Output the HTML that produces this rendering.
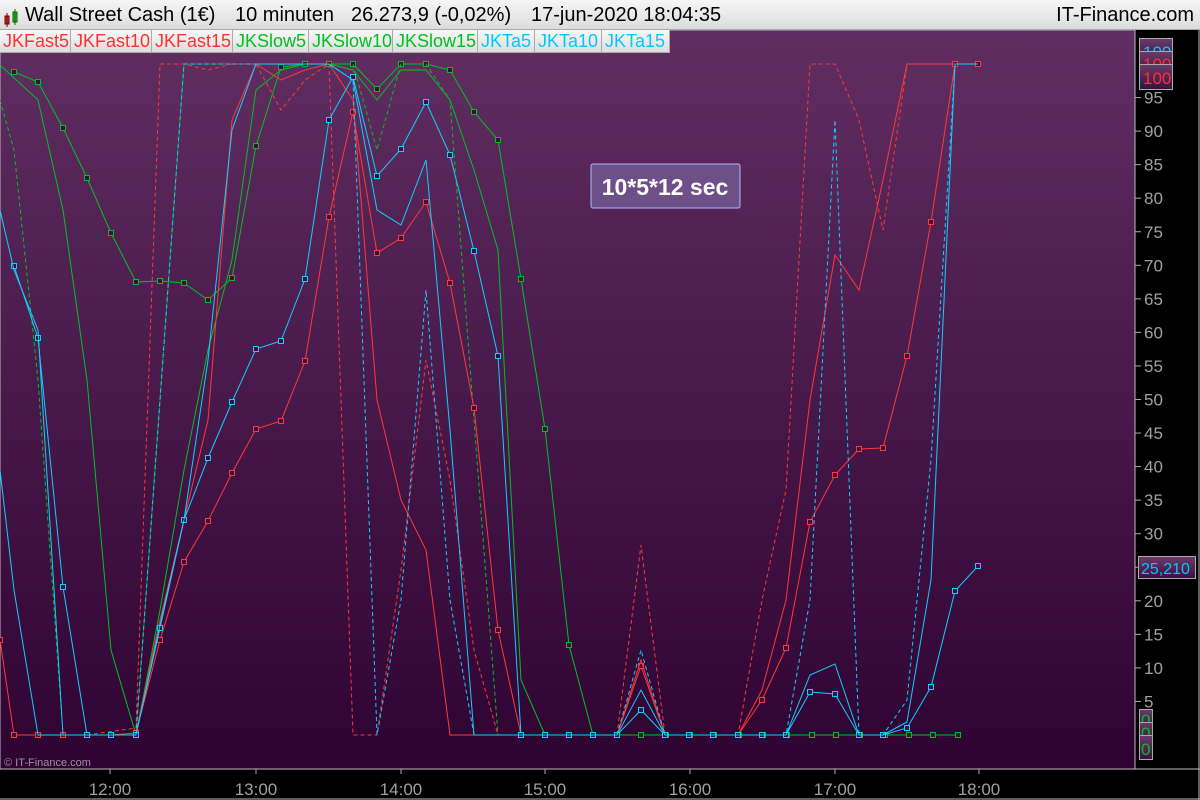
<!DOCTYPE html>
<html><head><meta charset="utf-8"><style>
body{margin:0;width:1200px;height:800px;background:#000;overflow:hidden;font-family:"Liberation Sans",sans-serif;position:relative}
#hdr{position:absolute;left:0;top:0;width:1200px;height:29px;background:linear-gradient(#f6f6f6,#dcdcdc);border-bottom:1px solid #aaa;font-size:20px;line-height:31px;color:#000}
#hdr .t{position:absolute;top:0;white-space:pre}
#leg{position:absolute;left:0;top:30px;height:22px;display:flex}
#leg div{box-sizing:border-box;font-size:18px;line-height:23px;padding-left:3px;background:linear-gradient(#f8f8f8,#dedede);border-right:1px solid #aaa;border-bottom:1px solid #aaa;height:23px;white-space:nowrap;overflow:hidden}
.r{color:#ff3030}.g{color:#00c020}.c{color:#00c8ff}
</style></head><body>
<svg width="1200" height="800" style="position:absolute;left:0;top:0">
<defs><linearGradient id="bg" x1="0" y1="0" x2="0" y2="1"><stop offset="0" stop-color="#612e62"/><stop offset="1" stop-color="#2e0332"/></linearGradient>
<linearGradient id="bx" x1="0" y1="0" x2="0" y2="1"><stop offset="0" stop-color="#6a3a6a"/><stop offset="1" stop-color="#3a1040"/></linearGradient></defs>
<rect x="0" y="30" width="1135" height="739" fill="url(#bg)" stroke="#bbb"/>
<line x1="0" y1="769" x2="1200" y2="769" stroke="#bbb"/>
<line x1="0" y1="799" x2="1200" y2="799" stroke="#bbb"/>
<line x1="1199" y1="30" x2="1199" y2="800" stroke="#bbb"/>
<g id="ax" fill="#a0a0a0" font-size="17" font-family="Liberation Sans"></g>
<g id="lines" fill="none" stroke-width="1"></g>
<text x="4" y="766" fill="#a090a0" font-size="11">© IT-Finance.com</text>
<rect x="591" y="164" width="149" height="44" rx="2" fill="#6e5088" stroke="#b0b8ff"/>
<text x="665" y="195" fill="#fff" font-size="23" font-weight="bold" text-anchor="middle">10*5*12 sec</text>
<g font-size="17">
<rect x="1139.5" y="38.5" width="33" height="25" fill="url(#bx)" stroke="#aaa"/><text x="1143" y="58" fill="#00c8ff">100</text>
<rect x="1139.5" y="51.5" width="33" height="25" fill="url(#bx)" stroke="#aaa"/><text x="1143" y="70" fill="#ff3030">100</text>
<rect x="1139.5" y="64.5" width="33" height="25" fill="url(#bx)" stroke="#aaa"/><text x="1143" y="84" fill="#ff3030">100</text>
<rect x="1138.5" y="556.5" width="57" height="22" fill="url(#bx)" stroke="#aaa"/><text x="1141" y="574" fill="#00c8ff" font-size="16">25,210</text>
<rect x="1139.5" y="709.5" width="13" height="20" fill="url(#bx)" stroke="#aaa"/><text x="1141" y="726" fill="#00c020">0</text>
<rect x="1139.5" y="722.5" width="13" height="20" fill="url(#bx)" stroke="#aaa"/><text x="1141" y="739" fill="#00c020">0</text>
<rect x="1139.5" y="735.5" width="13" height="24" fill="url(#bx)" stroke="#aaa"/><text x="1141" y="755" fill="#00c020">0</text>
</g>
</svg>
<div id="hdr"><span class="t" style="left:3px;top:6px"><svg width="20" height="18"><rect x="2" y="7" width="4" height="8" fill="#e03030" stroke="#600"/><line x1="4" y1="4" x2="4" y2="18" stroke="#600"/><rect x="10" y="3" width="4" height="10" fill="#30c030" stroke="#060"/><line x1="12" y1="0" x2="12" y2="16" stroke="#060"/></svg></span>
<span class="t" style="left:25px">Wall Street Cash (1€)</span>
<span class="t" style="left:235px">10 minuten</span>
<span class="t" style="left:351px">26.273,9 (-0,02%)</span>
<span class="t" style="left:531px">17-jun-2020 18:04:35</span>
<span class="t" style="right:6px">IT-Finance.com</span></div>
<div id="leg"><div class="r" style="width:71px">JKFast5</div><div class="r" style="width:81px">JKFast10</div><div class="r" style="width:81px">JKFast15</div><div class="g" style="width:76px">JKSlow5</div><div class="g" style="width:84px">JKSlow10</div><div class="g" style="width:85px">JKSlow15</div><div class="c" style="width:57px">JKTa5</div><div class="c" style="width:67px">JKTa10</div><div class="c" style="width:68px">JKTa15</div></div>
<script>
var NS="http://www.w3.org/2000/svg";
function el(t,a,p){var e=document.createElementNS(NS,t);for(var k in a)e.setAttribute(k,a[k]);(p||document.getElementById('lines')).appendChild(e);return e;}
var ax=document.getElementById('ax');
for(var v=5;v<=95;v+=5){var y=735-6.71*v;el('line',{x1:1135,y1:y,x2:1141,y2:y,stroke:'#aaa'},ax);var t=el('text',{x:1144,y:y+6},ax);t.textContent=v;}
var hrs=[[110,'12:00'],[256,'13:00'],[401,'14:00'],[545,'15:00'],[690,'16:00'],[835,'17:00'],[979,'18:00']];
hrs.forEach(function(h){el('line',{x1:h[0],y1:769,x2:h[0],y2:774,stroke:'#aaa'},ax);var t=el('text',{x:h[0],y:795,'text-anchor':'middle'},ax);t.textContent=h[1];});
function flat(a,b){var r=[];for(var x=a;x<=b+1;x+=24.33)r.push([Math.round(x),735]);return r;}
function S(pts,col,dash,mark){var d='M'+pts.map(function(p){return p[0]+','+p[1]}).join(' L');
var a={d:d,stroke:col};if(dash)a['stroke-dasharray']='4,3';el('path',a);
if(mark)pts.forEach(function(p){el('rect',{x:p[0]-2.5,y:p[1]-2.5,width:5,height:5,stroke:col,fill:'#3a1040'});});}
var R='#ff3838',G='#00c020',C='#10d0ff';
S([[14,72],[38,82],[63,128],[87,178],[111,233],[136,282],[160,281],[184,283],[208,300],[232,278],[256,146],[281,67],[305,64],[329,64],[353,64],[377,89],[401,64],[426,64],[450,70],[474,112],[498,140],[521,279],[545,429],[569,645],[593,735]].concat(flat(617,978)),G,0,1);
S([[0,65],[38,100],[63,210],[87,380],[111,650],[136,735],[160,610],[184,470],[208,350],[232,260],[256,90],[281,70],[305,64],[329,64],[353,70],[377,100],[401,70],[426,70],[450,100],[474,170],[498,250],[521,680],[545,735]],G,0,0);
S([[0,100],[14,150],[38,380],[63,735],[87,735],[111,735],[136,735],[160,400],[184,64],[208,64],[232,64],[256,64],[281,64],[305,64],[329,64],[353,64],[377,150],[401,64],[426,64],[450,100],[474,420],[498,735]],G,1,0);
S([[0,640],[14,735],[38,735],[63,735],[87,735],[111,735],[136,733],[160,640],[184,562],[208,521],[232,473],[256,429],[281,421],[305,361],[329,217],[353,112],[377,253],[401,238],[426,202],[450,283],[474,408],[498,630],[521,735],[545,735],[569,735],[593,735],[617,735],[641,666],[665,735],[689,735],[713,735],[738,735],[762,700],[786,648],[810,522],[835,475],[859,449],[883,448],[907,356],[931,222],[955,64],[978,64]],R,0,1);
S([[136,733],[160,620],[184,520],[208,420],[232,120],[256,64],[281,80],[305,70],[329,64],[353,100],[377,400],[401,500],[426,550],[450,735],[617,735],[641,660],[665,735],[738,735],[762,690],[786,600],[810,400],[835,255],[859,290],[883,180],[907,64],[978,64]],R,0,0);
S([[87,735],[136,728],[160,64],[184,64],[208,70],[232,64],[256,64],[281,110],[305,80],[329,64],[353,735],[377,735],[401,570],[426,360],[450,480],[474,650],[498,735],[617,735],[641,545],[665,735],[738,735],[762,600],[786,490],[810,64],[835,64],[859,120],[883,230],[907,64]],R,1,0);
S([[0,470],[14,590],[38,735],[87,735]],C,0,0);
S([[14,266],[38,338],[63,587],[87,735],[111,735],[136,735],[160,628],[184,520],[208,458],[232,402],[256,349],[281,341],[305,279],[329,120],[353,77],[377,176],[401,149],[426,102],[450,155],[474,251],[498,356],[521,735],[545,735],[569,735],[593,735],[617,735],[641,710],[665,735],[689,735],[713,735],[738,735],[762,735],[786,735],[810,692],[835,694],[859,735],[883,735],[907,728],[931,687],[955,591],[978,566]],C,0,1);
S([[0,210],[14,270],[38,330],[63,735],[136,735],[160,625],[184,520],[208,360],[232,130],[256,64],[281,64],[305,64],[329,64],[353,80],[377,210],[401,225],[426,160],[450,430],[474,735],[617,735],[641,690],[665,735],[786,735],[810,675],[835,664],[859,735],[883,735],[907,722],[931,580],[955,64],[978,64]],C,0,0);
S([[136,735],[160,400],[184,64],[208,64],[329,64],[353,80],[377,735],[401,600],[426,290],[450,600],[474,735],[617,735],[641,650],[665,735],[786,735],[810,600],[835,120],[859,735],[883,735],[907,700],[931,460],[955,64]],C,1,0);
</script>
</body></html>
